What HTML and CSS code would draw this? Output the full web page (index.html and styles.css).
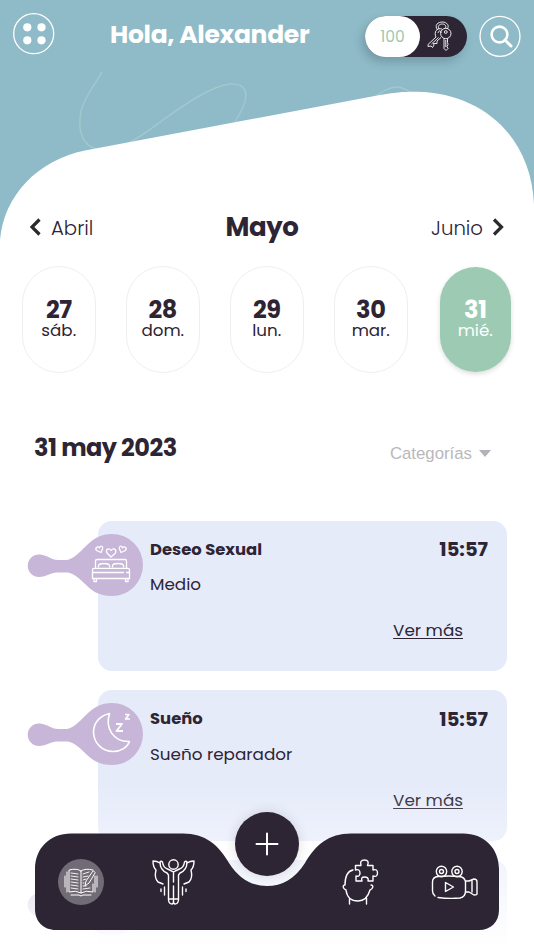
FILE: index.html
```html
<!DOCTYPE html>
<html lang="es">
  <head>
    <meta charset="UTF-8" />
    <meta name="viewport" content="width=device-width, initial-scale=1.0" />
    <title>Diario</title>
    <link rel="stylesheet" href="styles.css">
  </head>

  <body>
    <div class="app">
      <svg class="hero" viewBox="0 0 534 260">
        <rect width="534" height="260" fill="#8ebbc7"/>
        <g fill="none" stroke="#a0c8ce" stroke-width="1.5">
          <path d="M102 72C93 87 84 98 81 111C77 132 83 145 96 149C120 154 145 133 163 120C188 102 212 86 230 84C246 83 249 93 243 107Q239 116 232 127"/>
          <path d="M372 99C383 90 391 86 399 87Q407 89 413 95"/>
        </g>
        <path fill="#fff" d="M0 240C4 195 38 160 85 150.500L380 95C395 92 408 91.500 417 91.700C482 93 531 136 534 204V260H0Z"/>
      </svg>

      <header class="header">
        <button class="round-btn" aria-label="Menu">
          <svg width="42" height="42" viewBox="0 0 42 42" fill="#fff">
            <circle cx="20.700" cy="20.700" r="20" fill="none" stroke="#fff" stroke-width="1.3"/>
            <circle cx="14.300" cy="14.300" r="4.100"/><circle cx="28.500" cy="14.300" r="4.100"/>
            <circle cx="14.300" cy="27.300" r="4.100"/><circle cx="28.500" cy="27.300" r="4.100"/>
          </svg>
        </button>
        <h1 class="greeting">Hola, Alexander</h1>
        <div class="points">
          <span class="points-value">100</span>
          <svg class="keys" width="28" height="32" viewBox="426 20 28 32">
            <g fill="none" stroke="#fff" stroke-width=".9" stroke-linejoin="round">
              <path d="M437.500 30C434 25 438 22 442.500 22C447 22 450 26 447 29M439 29C437 25.500 440 24 442.500 24C445 24 447 26 445 28.500"/>
              <circle cx="445.800" cy="33.500" r="5.200"/><circle cx="445.800" cy="32" r="1.400"/>
              <path d="M444 38.500V48.500L446 50.500L448 48.500L447 46.500L448 44.500L447.500 42.500V38.500M445.800 40V47"/>
              <path d="M442 29C437 27.500 433.500 32 436 37L428 44.500V46.500L431 46L432.500 47.500L434 45L433.500 43.500L437 43.500V41L441 37.500M438 33C438.500 30.500 441 30 441 33M438.500 37.500L431.500 44"/>
            </g>
          </svg>
        </div>
        <button class="round-btn search-btn" aria-label="Buscar">
          <svg width="42" height="42" viewBox="0 0 42 42" fill="none" stroke="#fff">
            <circle cx="21" cy="21.300" r="20" stroke-width="1.300"/>
            <circle cx="20.500" cy="19.500" r="7.900" stroke-width="2.600"/>
            <path d="M26 25L32 31" stroke-width="3" stroke-linecap="round"/>
          </svg>
        </button>
      </header>

      <section class="months">
        <a class="month-link">
          <svg width="12" height="18" viewBox="0 0 12 18"><path d="M9.500 1.500L2 9L9.500 16.500"/></svg>
          <span>Abril</span>
        </a>
        <h2 class="month">Mayo</h2>
        <a class="month-link next">
          <span>Junio</span>
          <svg width="12" height="18" viewBox="0 0 12 18"><path d="M2 1.500L9.500 9L2 16.500"/></svg>
        </a>
      </section>

      <section class="days">
        <div class="day"><b>27</b><span>sáb.</span></div>
        <div class="day"><b>28</b><span>dom.</span></div>
        <div class="day"><b>29</b><span>lun.</span></div>
        <div class="day"><b>30</b><span>mar.</span></div>
        <div class="day selected"><b>31</b><span>mié.</span></div>
      </section>

      <section class="list-head">
        <h3 class="date">31 may 2023</h3>
        <div class="categories"><span>Categorías</span><i class="caret"></i></div>
      </section>

      <main class="entries">
        <article class="card">
          <svg class="blob" width="116" height="62" viewBox="27 534 116 62">
            <path fill="#c7b6d8" d="M112 534A31 31 0 0 1 112 596C98 596 91 590 84 583C76 575 71 572.500 66 572.500H57C50 572.500 47 577 39 577A11.300 11.300 0 0 1 39 554.400C47 554.400 51 560 58 560H66C72 560 79 553 86 546C94 538 101 534 112 534Z"/>
            <g fill="none" stroke="#fff" stroke-width="1.300" stroke-linejoin="round">
              <path d="M95.500 568V561Q95.500 559.500 97 559.500H125Q126.500 559.500 126.500 561V568M94 568.300H128Q129.500 568.300 129.500 570V578.500H92.500V570Q92.500 568.300 94 568.300ZM92.500 572.500H124M126 572.500H129.500M94 578.500V581.500H96.500V578.500M125.500 578.500V581.500H128V578.500"/>
              <path d="M98.500 567.500V565.500Q99 563.500 104 563.500Q109 563.500 109.500 565.500V567.500M112.500 567.500V565.500Q113 563.500 118 563.500Q123 563.500 123.500 565.500V567.500"/>
              <path d="M111 557L107 553C105 549 109 547.500 111 550.500C113 547.500 117 549 115.500 553Z"/>
              <path d="M101 552.500L96.500 550.500C94.500 547.500 98 545.500 99.500 548C100 545 103.500 546 102.500 549Z"/>
              <path d="M121 552.500L125.500 550.500C127.500 547.500 124 545.500 122.500 548C122 545 118.500 546 119.500 549Z"/>
            </g>
          </svg>
          <div class="card-top"><h4>Deseo Sexual</h4><time>15:57</time></div>
          <p>Medio</p>
          <a class="more">Ver más</a>
        </article>

        <article class="card second">
          <svg class="blob" width="116" height="62" viewBox="27 534 116 62">
            <path fill="#c7b6d8" d="M112 534A31 31 0 0 1 112 596C98 596 91 590 84 583C76 575 71 572.500 66 572.500H57C50 572.500 47 577 39 577A11.300 11.300 0 0 1 39 554.400C47 554.400 51 560 58 560H66C72 560 79 553 86 546C94 538 101 534 112 534Z"/>
            <g fill="none" stroke="#fff" stroke-width="1.600" stroke-linejoin="round">
              <path d="M109.500 544.500C99 547 93.500 554.500 93.500 563.500C94 574 102 582.500 113 582.500C121 582.500 127.500 578 129.500 572.500C113 573 105 559 109.500 544.500Z"/>
              <path d="M116 555H122L116.500 562H123" stroke-width="1.800"/>
              <path d="M125 545.500H129L125.500 550H130" stroke-width="1.600"/>
            </g>
          </svg>
          <div class="card-top"><h4>Sueño</h4><time>15:57</time></div>
          <p>Sueño reparador</p>
          <a class="more">Ver más</a>
        </article>

        <article class="card">
          <svg class="blob" width="116" height="62" viewBox="27 534 116 62">
            <path fill="#c7b6d8" d="M112 534A31 31 0 0 1 112 596C98 596 91 590 84 583C76 575 71 572.500 66 572.500H57C50 572.500 47 577 39 577A11.300 11.300 0 0 1 39 554.400C47 554.400 51 560 58 560H66C72 560 79 553 86 546C94 538 101 534 112 534Z"/>
          </svg>
        </article>
      </main>

      <div class="fade"></div>

      <nav class="navbar">
        <svg class="navbar-shape" width="464" height="97" viewBox="0 0 464 97">
          <path fill="#2d2434" d="M36 .400H148C170 .400 184 12 194 30C204 46 217 53 232 53C247 53 260 46 270 30C280 12 294 .400 316 .400H428C449 .400 464 15 464 36V77C464 89 456 97 444 97H21C8 97 0 88 0 76V36C0 15 15 .400 36 .400Z"/>
        </svg>
        <button class="add" aria-label="Nuevo">
          <svg width="24" height="24" viewBox="0 0 24 24"><path d="M12 1.500V22.500M1.500 12H22.500" stroke="#fff" stroke-width="2" stroke-linecap="round"/></svg>
        </button>
        <div class="nav-items">
          <a class="nav-item active">
            <svg width="46" height="46" viewBox="58 859 46 46" fill="none" stroke="#fff" stroke-width="1" stroke-linecap="round">
              <path d="M81 871Q77 868 69 870V892Q76 890 81 893Q86 890 93 892V884M81 871V893M81 871Q85 868 93 870M67 872V892M95 876V892M65 876V887M97 876V887M71 895H79L81 896L83 895H91"/>
              <path stroke-width=".9" d="M71 873L78 874M71 876L78 877M71 879L78 880M71 882L78 883M71 885L78 886M71 888L78 889M83 874L89 872M83 877L88 876M83 880L86 879M83 883H84M83 886H86M83 889L90 888"/>
              <path d="M93 871L86 881L85 886L89 883L95 873Z"/>
            </svg>
          </a>
          <a class="nav-item">
            <svg width="46" height="48" viewBox="151 858 46 48" fill="none" stroke="#fff" stroke-width="1.400" stroke-linecap="round" stroke-linejoin="round">
              <circle cx="173.500" cy="864.500" r="4.700"/>
              <path d="M167.500 869C164 868 163 866 162.500 862Q161 860.500 160 862C160 867 162 871 167 873L168.500 875V900Q169 904 172 904Q173.500 904 173.500 901V886M179.500 869C183 868 184 866 184.500 862Q186 860.500 187 862C187 867 185 871 180 873L178.500 875V900Q178 904 175 904Q173.500 904 173.500 901M167.500 869Q170 870 173.500 872Q177 870 179.500 869M173.500 872V882M168.500 899H178.500"/>
              <path d="M160 863Q157 861 153 861Q153 867 156 870Q154 878 158 882L163 884M187 863Q190 861 194 861Q194 867 191 870Q193 878 189 882L184 884M161 889V891.500M186 889V891.500M164.500 887V895M182.500 887V895"/>
            </svg>
          </a>
          <a class="nav-item">
            <svg width="46" height="48" viewBox="337 858 46 48" fill="none" stroke="#fff" stroke-width="1.400" stroke-linecap="round" stroke-linejoin="round">
              <path d="M353 870C348 871 345 876 345 885C342 885 343 889 346 890C347 898 352 901 358 901C364 901 368 897 370 890C373 889 374 885 371 885M349.500 898V904M366.500 898V904"/>
              <path d="M355.500 865.500H361C360 862 361 860 364.500 860C368 860 369 862 367.500 865.500H373V870C376 869 377.500 870 377.500 873C377.500 876 376 877 373 876V881H368C369 878 367 877 364.500 877C362 877 361 878 362 881H356V876C359 877 360 875 360 873C360 870 358 869 355.500 870Z"/>
            </svg>
          </a>
          <a class="nav-item">
            <svg width="48" height="46" viewBox="431 859 48 46" fill="none" stroke="#fff" stroke-width="1.400" stroke-linecap="round" stroke-linejoin="round">
              <path d="M435 896Q432.500 894 432.500 891V882Q432.500 877 438 876.500Q449 875.500 459 876.500Q465 877 465.500 882V891Q465.500 897 460 898Q449 899 438 897.500M466 881H469L474 879Q477 879 477 882V894Q477 895 474 895L469 892H466M472 881V892"/>
              <path d="M445.500 882.500L453.500 887L445.500 891.500Z"/>
              <circle cx="441.500" cy="871.500" r="5.200"/><circle cx="441.500" cy="871.500" r="2"/>
              <circle cx="457" cy="871.500" r="5.200"/><circle cx="457" cy="871.500" r="2"/>
            </svg>
          </a>
        </div>
      </nav>
    </div>
  </body>
</html>
```
FILE: styles.css
```css
* {
  box-sizing: border-box;
}
body {
  margin: 0;
  font-family: "Poppins", "Inter", sans-serif;
  color: #2d2434;
  background: #fff;
}
h1, h2, h3, h4, p {
  margin: 0;
}
button {
  padding: 0;
  border: 0;
  background: none;
}
svg {
  display: block;
}
.app {
  position: relative;
  width: 534px;
  height: 950px;
  overflow: hidden;
}
.hero {
  position: absolute;
  top: 0;
  left: 0;
  width: 534px;
  height: 260px;
  z-index: -1;
}

/* header */
.header {
  display: flex;
  height: 205px;
  padding: 13px 13px 0;
}
.round-btn {
  width: 42px;
  height: 42px;
}
.search-btn {
  margin: 2px 0 0 12px;
}
.greeting {
  width: 255px;
  margin-left: 55px;
  line-height: 43px;
  font-size: 25px;
  font-weight: 700;
  letter-spacing: -0.3px;
  color: #fff;
  white-space: nowrap;
}
.points {
  display: flex;
  width: 102px;
  height: 41px;
  margin-top: 3px;
  border-radius: 21px;
  background: #2d2434;
  box-shadow: -3px 5px 8px rgba(45, 60, 80, 0.25);
}
.points-value {
  width: 55px;
  border-radius: 21px;
  background: #fff;
  color: #9ccab2;
  font-size: 15.5px;
  line-height: 41px;
  text-align: center;
}
.keys {
  margin: 4px 0 0 6px;
}

/* calendar */
.months {
  display: grid;
  grid-template-columns: 1fr auto 1fr;
  align-items: center;
  height: 44px;
  padding: 0 30px 0 30px;
}
.month-link {
  display: flex;
  align-items: center;
  gap: 9px;
  font-size: 19.7px;
  font-weight: 300;
  line-height: 42px;
}
.month-link span {
  padding-top: 1px;
}
.month-link path {
  fill: none;
  stroke: #2b2b2d;
  stroke-width: 3.2;
}
.next {
  justify-content: flex-end;
}
.month {
  margin-right: 10px;
  font-size: 26px;
  line-height: 42px;
  letter-spacing: -0.4px;
}
.days {
  display: flex;
  gap: 30.5px;
  align-items: center;
  padding: 17px 0 0 22px;
}
.day {
  display: flex;
  flex-direction: column;
  align-items: center;
  width: 73.5px;
  height: 107px;
  padding-top: 31px;
  border: 1.5px solid #efefef;
  border-radius: 37px;
  font-size: 16.7px;
  line-height: 18px;
}
.day b {
  font-size: 24px;
  line-height: 23px;
  letter-spacing: -0.4px;
}
.selected {
  width: 71.5px;
  height: 105px;
  margin-left: 1.5px;
  border: 0;
  background: #9ccab2;
  color: #fff;
  box-shadow: 0 2px 5px rgba(0, 0, 0, 0.14);
}

/* entries */
.list-head {
  display: flex;
  justify-content: space-between;
  height: 148px;
  padding: 56px 43px 0 34px;
}
.date {
  font-size: 24px;
  line-height: 37px;
  letter-spacing: -0.5px;
}
.categories {
  display: flex;
  align-items: center;
  height: 49px;
  gap: 7px;
  font: 16.8px "Liberation Sans", sans-serif;
  color: #b9b8bd;
}
.caret {
  border: 6px solid transparent;
  border-top: 7px solid #b3b2b8;
  border-bottom: 0;
}
.entries {
  display: flex;
  flex-direction: column;
  gap: 19px;
  padding: 0 27px 0 98px;
}
.card {
  position: relative;
  flex: none;
  height: 150px;
  padding: 15px 19px 0 52px;
  border-radius: 14px;
  background: #e6ebfa;
}
.second {
  height: 151px;
}
.blob {
  position: absolute;
  top: 13px;
  left: -71px;
}
.card-top {
  display: flex;
  justify-content: space-between;
  line-height: 27px;
}
.card h4 {
  font-size: 16.4px;
}
.card time {
  font-size: 19.5px;
  font-weight: 700;
}
.card p {
  margin-top: 8px;
  font-size: 16.8px;
  line-height: 26px;
}
.second time {
  padding-top: 1px;
}
.more {
  display: block;
  margin: 20px 25px 0 0;
  font-size: 16.8px;
  line-height: 26px;
  text-align: right;
  text-decoration: underline;
  text-underline-offset: 2px;
  text-decoration-thickness: 1px;
}
.fade {
  position: absolute;
  left: 0;
  bottom: 0;
  width: 100%;
  height: 165px;
  background: linear-gradient(rgba(255, 255, 255, 0), #fff 98%);
}

/* bottom bar */
.navbar {
  position: absolute;
  left: 35px;
  top: 833px;
  width: 464px;
  height: 97px;
}
.navbar-shape {
  position: absolute;
}
.add {
  position: absolute;
  left: 200px;
  top: -21px;
  display: flex;
  align-items: center;
  justify-content: center;
  width: 64px;
  height: 64px;
  border-radius: 50%;
  background: #2d2434;
  box-shadow: 0 0 12px rgba(45, 36, 52, 0.15);
}
.nav-items {
  position: relative;
  display: grid;
  grid-template-columns: 46px 46px 46px 48px;
  column-gap: 47px;
  align-items: center;
  height: 97px;
  padding-left: 23px;
}
.nav-item:nth-child(3) {
  margin-left: 93px;
}
.nav-item:nth-child(4) {
  margin-left: 94px;
}
.active {
  border-radius: 50%;
  background: #716b76;
}
```
